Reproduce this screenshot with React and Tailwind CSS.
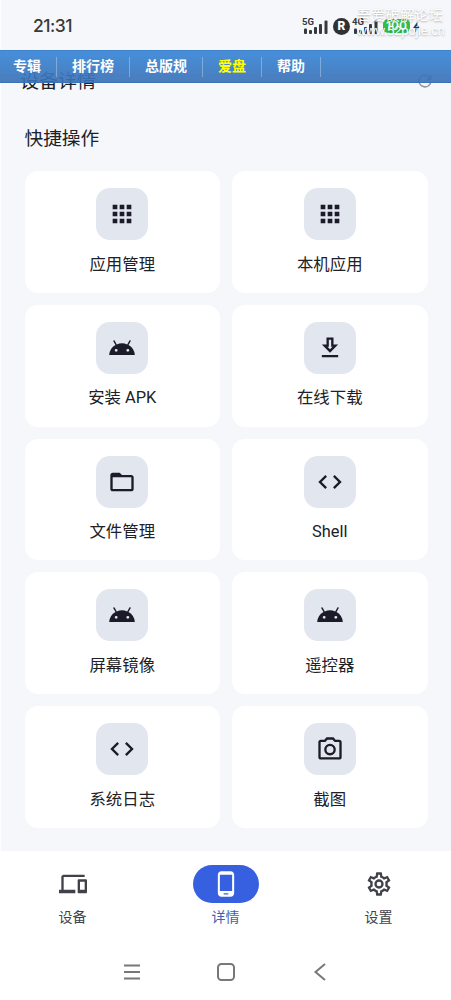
import React, { useState } from 'react';

// --- IKONER ---
const icons = {
  apps: 'M4 8h4V4H4v4zm6 12h4v-4h-4v4zm-6 0h4v-4H4v4zm0-6h4v-4H4v4zm6 0h4v-4h-4v4zm6-10v4h4V4h-4zm-6 4h4V4h-4v4zm6 6h4v-4h-4v4zm0 6h4v-4h-4v4z',
  android: 'M17.6 9.48l1.84-3.18c.16-.31.04-.69-.26-.85-.29-.15-.65-.06-.83.22l-1.88 3.24a11.43 11.43 0 0 0-8.94 0L5.65 5.67c-.19-.29-.58-.38-.87-.2-.28.18-.37.54-.22.83L6.4 9.48A10.78 10.78 0 0 0 1 18h22a10.78 10.78 0 0 0-5.4-8.52zM7 15.25a1.25 1.25 0 1 1 0-2.5 1.25 1.25 0 0 1 0 2.5zm10 0a1.25 1.25 0 1 1 0-2.5 1.25 1.25 0 0 1 0 2.5z',
  download: 'M19 9h-4V3H9v6H5l7 7 7-7zm-8 2V5h2v6h1.17L12 13.17 9.83 11H11zm-6 7h14v2H5v-2z',
  folder: 'M20 6h-8l-2-2H4c-1.1 0-1.99.9-1.99 2L2 18c0 1.1.9 2 2 2h16c1.1 0 2-.9 2-2V8c0-1.1-.9-2-2-2zm0 12H4V8h16v10z',
  code: 'M9.4 16.6L4.8 12l4.6-4.6L8 6l-6 6 6 6 1.4-1.4zm5.2 0l4.6-4.6-4.6-4.6L16 6l6 6-6 6-1.4-1.4z',
  camera: 'M20 4h-3.17L15 2H9L7.17 4H4c-1.1 0-2 .9-2 2v13c0 1.1.9 2 2 2h16c1.1 0 2-.9 2-2V6c0-1.1-.9-2-2-2zm0 15H4V6h4.05l1.83-2h4.24l1.83 2H20v13zM12 7.5a5 5 0 1 0 0 10 5 5 0 0 0 0-10zm0 8a3 3 0 1 1 0-6 3 3 0 0 1 0 6z',
  devices: 'M4 6h18V4H4c-1.1 0-2 .9-2 2v11H0v3h14v-3H4V6zm19 2h-6c-.55 0-1 .45-1 1v10c0 .55.45 1 1 1h6c.55 0 1-.45 1-1V9c0-.55-.45-1-1-1zm-1 9h-4v-7h4v7z',
  phone: 'M16 1H8C6.34 1 5 2.34 5 4v16c0 1.66 1.34 3 3 3h8c1.66 0 3-1.34 3-3V4c0-1.66-1.34-3-3-3zm-2 20h-4v-1h4v1zm3.25-3H6.75V4h10.5v14z',
  settings: 'M19.43 12.98c.04-.32.07-.64.07-.98s-.03-.66-.07-.98l2.11-1.65c.19-.15.24-.42.12-.64l-2-3.46c-.09-.16-.26-.25-.44-.25-.06 0-.12.01-.17.03l-2.49 1c-.52-.4-1.08-.73-1.69-.98l-.38-2.65C14.46 2.18 14.25 2 14 2h-4c-.25 0-.46.18-.49.42l-.38 2.65c-.61.25-1.17.59-1.69.98l-2.49-1c-.06-.02-.12-.03-.18-.03-.17 0-.34.09-.43.25l-2 3.46c-.13.22-.07.49.12.64l2.11 1.65c-.04.32-.07.65-.07.98s.03.66.07.98l-2.11 1.65c-.19.15-.24.42-.12.64l2 3.46c.09.16.26.25.44.25.06 0 .12-.01.17-.03l2.49-1c.52.4 1.08.73 1.69.98l.38 2.65c.03.24.24.42.49.42h4c.25 0 .46-.18.49-.42l.38-2.65c.61-.25 1.17-.59 1.69-.98l2.49 1c.06.02.12.03.18.03.17 0 .34-.09.43-.25l2-3.46c.12-.22.07-.49-.12-.64l-2.11-1.65zm-1.98-1.71c.04.31.05.52.05.73s-.02.43-.05.73l-.14 1.13.89.7 1.08.84-.7 1.21-1.27-.51-1.04-.42-.9.68c-.43.32-.84.56-1.25.73l-1.06.43-.16 1.13-.2 1.35h-1.4l-.19-1.35-.16-1.13-1.06-.43c-.43-.18-.83-.41-1.23-.71l-.91-.7-1.06.43-1.27.51-.7-1.21 1.08-.84.89-.7-.14-1.13c-.03-.31-.05-.54-.05-.74s.02-.43.05-.73l.14-1.13-.89-.7-1.08-.84.7-1.21 1.27.51 1.04.42.9-.68c.43-.32.84-.56 1.25-.73l1.06-.43.16-1.13.2-1.35h1.39l.19 1.35.16 1.13 1.06.43c.43.18.83.41 1.23.71l.91.7 1.06-.43 1.27-.51.7 1.21-1.07.85-.89.7.14 1.13zM12 8a4 4 0 1 0 0 8 4 4 0 0 0 0-8zm0 6a2 2 0 1 1 0-4 2 2 0 0 1 0 4z',
  refresh: 'M17.65 6.35A7.96 7.96 0 0 0 12 4a8 8 0 1 0 7.73 10h-2.08A6 6 0 1 1 12 6c1.66 0 3.14.69 4.22 1.78L13 11h7V4l-2.35 2.35z',
};

const Icon = ({ name, className }) => (
  <svg viewBox="0 0 24 24" fill="currentColor" fillRule="evenodd" className={className}>
    <path d={icons[name]} />
  </svg>
);

const actions = [
  { label: '应用管理', icon: 'apps' },
  { label: '本机应用', icon: 'apps' },
  { label: '安装 APK', icon: 'android' },
  { label: '在线下载', icon: 'download' },
  { label: '文件管理', icon: 'folder' },
  { label: 'Shell', icon: 'code' },
  { label: '屏幕镜像', icon: 'android' },
  { label: '遥控器', icon: 'android' },
  { label: '系统日志', icon: 'code' },
  { label: '截图', icon: 'camera' },
];

const tabs = [
  { id: 'devices', label: '设备', icon: 'devices' },
  { id: 'detail', label: '详情', icon: 'phone' },
  { id: 'settings', label: '设置', icon: 'settings' },
];

const links = ['专辑', '排行榜', '总版规', '爱盘', '帮助'];

// --- STATUSRAD ---
const Signal = ({ label, className }) => (
  <div className={`relative h-[18px] ${className}`}>
    <span className="absolute -left-px -top-px font-['Roboto'] text-[9.500px] leading-[9px] font-bold">{label}</span>
    <svg viewBox="0 0 25 18" className="h-[18px] w-[25px]" fill="currentColor">
      <rect x="1" y="10.500" width="3" height="5.500" rx="1" />
      <rect x="6" y="12" width="3" height="4" rx="1" />
      <rect x="11" y="9" width="3" height="7" rx="1" />
      <rect x="16" y="6" width="3" height="10" rx="1" />
      <rect x="21.500" y="2.500" width="3" height="13.500" rx="1" />
    </svg>
  </div>
);

const StatusBar = () => (
  <div className="relative flex h-[50px] items-center pl-[33px] pt-[3px] text-[#38393d]">
    <span className="w-[270px] font-['Inter'] text-[17.500px] font-medium tracking-[-0.5px]">21:31</span>
    <Signal label="5G" className="w-[30px]" />
    <span className="mb-px flex size-[17px] items-center justify-center rounded-full bg-[#303135] font-['Roboto'] text-[12px] font-black text-white">R</span>
    <Signal label="4G" className="ml-[3px] w-[30px]" />
    <span className="mb-px flex h-[14px] w-[27px] items-center justify-center rounded-[5px] bg-[#31bf4c] font-['Inter'] text-[12px] font-semibold text-white">100</span>
    <svg viewBox="0 0 8 12" className="ml-[3px] h-3 w-[7px]" fill="currentColor">
      <path d="M5 0L0 7h3L2.500 12 8 5H5z" />
    </svg>
    <div className="absolute left-[357px] top-[7px] whitespace-nowrap text-[14px] leading-[16px] text-white [text-shadow:0_1px_2px_rgba(0,0,0,0.3)]">
      <p className="tracking-[0.4px]">吾爱破解论坛</p>
      <p className="font-['Liberation_Sans'] text-[13px] tracking-[-0.2px]">www.52pojie.cn</p>
    </div>
  </div>
);

const ForumBar = () => (
  <div className="absolute inset-x-0 top-[50px] flex h-[33px] items-center border-y border-t-[#3f82cb] border-b-[#3a6fae]/90 bg-linear-to-b from-[#468fdb] to-[#376fb5]/90">
    {links.map((text) => (
      <a
        key={text}
        className={`flex h-5 items-center border-r border-white/30 px-[15px] text-[14px] font-bold first:pl-[13px] ${text === '爱盘' ? 'text-[#ffff00]' : 'text-white'}`}
      >
        {text}
      </a>
    ))}
  </div>
);

const App = () => {
  const [tab, setTab] = useState('detail');

  return (
    <div className="relative flex h-[1000px] w-[451px] flex-col overflow-hidden bg-[#f5f7fb] font-['Roboto','Noto_Sans_CJK_SC',sans-serif] text-[#202126] shadow-[inset_1px_0_#fcfdfe]">
      <StatusBar />

      <header className="flex h-[62px] items-center justify-between pl-[20px] pr-[16px]">
        <h1 className="pt-[2px] text-[19px] leading-6">设备详情</h1>
        <Icon name="refresh" className="size-5 text-[#92979f]" />
      </header>
      <ForumBar />

      <main className="h-[739px] px-[24.500px] pt-[13px]">
        <h2 className="h-[46px] text-[18.700px] leading-7">快捷操作</h2>
        <div className="grid w-[403px] grid-cols-2 gap-3">
          {actions.map((a) => (
            <button key={a.label} className="flex h-[121.800px] flex-col items-center rounded-[13px] bg-white pt-[17px]">
              <span className="flex size-[52px] items-center justify-center rounded-[14px] bg-[#e2e6ee]">
                <Icon name={a.icon} className="size-7 text-[#1b1b29]" />
              </span>
              <span className="mt-[12.500px] text-[16.400px] leading-6">{a.label}</span>
            </button>
          ))}
        </div>
      </main>

      <nav className="-mx-1 flex h-[95px] bg-white pt-[14px]">
        {tabs.map((t) => (
          <button
            key={t.id}
            onClick={() => setTab(t.id)}
            className={`flex w-[153px] flex-col items-center ${tab === t.id ? 'text-[#3e62ad]' : 'text-[#414249]'}`}
          >
            <span className={`flex h-[38px] w-[66px] items-center justify-center rounded-full ${tab === t.id ? 'bg-[#3660df] text-white' : ''}`}>
              <Icon name={t.icon} className="size-7" />
            </span>
            <span className="mt-1 text-[14px] leading-5">{t.label}</span>
          </button>
        ))}
      </nav>

      {/* SYSTEMKNAPPAR */}
      <div className="flex h-[54px] justify-center gap-[76px] bg-white pt-[17px] text-[#77787a]">
        <svg viewBox="0 0 18 18" className="size-[18px]" fill="none" stroke="currentColor" strokeWidth="2">
          <path d="M1 2.500h16M1 9h16M1 15.500h16" />
        </svg>
        <svg viewBox="0 0 18 18" className="size-[18px]" fill="none" stroke="currentColor" strokeWidth="2">
          <rect x="1" y="1" width="16" height="16" rx="3.500" />
        </svg>
        <svg viewBox="0 0 18 18" className="size-[18px]" fill="none" stroke="currentColor" strokeWidth="2">
          <path d="M14 1L4.500 9l9.500 8" />
        </svg>
      </div>
    </div>
  );
};

export default App;
